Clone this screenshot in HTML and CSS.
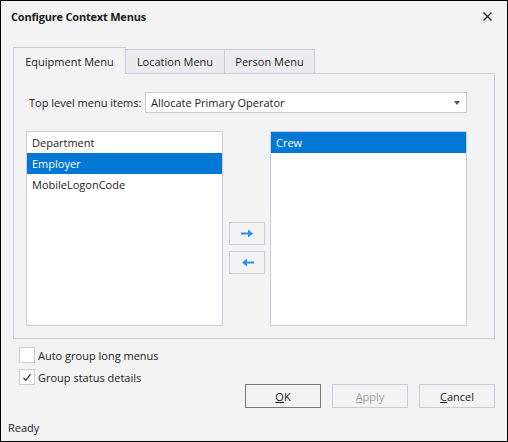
FILE: index.html
```html
<!DOCTYPE html>
<html>
<head>
<meta charset="utf-8">
<link rel="stylesheet" href="styles.css">
</head>
<body>
<div class="window">
  <div class="titlebar">
    <span class="title">Configure Context Menus</span>
    <svg class="close" width="9" height="9" viewBox="0 0 9 9"><path d="M0.5 0.5 L8.5 8.5 M8.5 0.5 L0.5 8.5" stroke="#2b2b2b" stroke-width="1.3" fill="none"/></svg>
  </div>
  <div class="content">
    <div class="tabs">
      <div class="tab active">Equipment Menu</div>
      <div class="tab t-loc">Location Menu</div>
      <div class="tab t-per">Person Menu</div>
    </div>
    <div class="panel">
      <div class="toprow">
        <span class="label">Top level menu items:</span>
        <div class="combo">
          <span>Allocate Primary Operator</span>
          <span class="caret"></span>
        </div>
      </div>
      <div class="lists">
        <div class="list">
          <div class="item">Department</div>
          <div class="item sel">Employer</div>
          <div class="item">MobileLogonCode</div>
        </div>
        <div class="arrows">
          <div class="abtn"><svg width="13" height="9" viewBox="0 0 13 9"><path d="M0 3.5 H7 V0.5 L12 4.5 L7 8.5 V5.5 H0 Z" fill="#2a8ff0"/></svg></div>
          <div class="abtn"><svg width="13" height="9" viewBox="0 0 13 9"><path d="M13 3.5 H6 V0.5 L1 4.5 L6 8.5 V5.5 H13 Z" fill="#2a8ff0"/></svg></div>
        </div>
        <div class="list">
          <div class="item sel">Crew</div>
        </div>
      </div>
    </div>
    <div class="bottom">
      <div class="checks">
        <label class="check"><span class="box"></span>Auto group long menus</label>
        <label class="check"><span class="box"><svg width="10" height="9" viewBox="0 0 10 9"><path d="M1.5 4.8 L3.8 7.3 L8.5 1.2" stroke="#222" stroke-width="1.1" fill="none"/></svg></span>Group status details</label>
      </div>
      <div class="buttons">
        <div class="btn default"><u>O</u>K</div>
        <div class="btn disabled"><u>A</u>pply</div>
        <div class="btn"><u>C</u>ancel</div>
      </div>
    </div>
  </div>
  <div class="status">Ready</div>
</div>
</body>
</html>
```
FILE: styles.css
```css
* { box-sizing: border-box; }
html, body { margin: 0; padding: 0; }
body {
  font-family: "Open Sans", "Noto Sans", sans-serif;
  font-size: 11px;
  color: #1b1b1b;
  background: #f3f3f3;
}
.window {
  width: 508px;
  height: 442px;
  border: 1px solid #000;
  background: #f3f3f3;
  display: flex;
  flex-direction: column;
}
.titlebar {
  height: 30px;
  display: flex;
  align-items: center;
  justify-content: space-between;
  padding: 0 15px 0 10px;
}
.title { font-weight: 700; letter-spacing: -0.2px; }
.close { display: block; margin-top: 1px; }
.content { padding: 16px 12px 0 12px; }
.tabs {
  display: flex;
  align-items: flex-end;
  height: 26px;
}
.tab {
  height: 24px;
  border: 1px solid #cbcbdc;
  border-bottom: none;
  background: #ececf0;
  display: flex;
  align-items: center;
  justify-content: center;
  margin-left: -1px;
}
.tab.active {
  margin-left: 0;
  width: 113px;
  height: 27px;
  margin-bottom: -1px;
  background: #f3f3f3;
  padding-top: 1px;
  position: relative;
  z-index: 1;
}
.t-loc { width: 100px; }
.t-per { width: 91px; }
.panel {
  border: 1px solid #cbcbdc;
  height: 266px;
  padding: 18px 27px 12px 12px;
}
.toprow {
  display: flex;
  align-items: center;
  padding-left: 3px;
  gap: 7px;
}
.label { width: 109px; white-space: nowrap; }
.combo {
  flex: 1;
  height: 21px;
  background: #fff;
  border: 1px solid #cbcbdc;
  display: flex;
  align-items: center;
  justify-content: space-between;
  padding: 0 6px 0 5px;
}
.caret {
  width: 0; height: 0;
  border-left: 3.5px solid transparent;
  border-right: 3.5px solid transparent;
  border-top: 4px solid #555;
  margin-top: 1px;
}
.lists {
  display: flex;
  margin-top: 18px;
}
.list {
  width: 197px;
  height: 195px;
  background: #fff;
  border: 1px solid #cbcbdc;
}
.item {
  height: 21px;
  line-height: 21px;
  padding-left: 5px;
}
.item.sel { background: #0078d4; color: #fff; }
.arrows {
  width: 47px;
  padding: 91px 5px 0 6px;
  display: flex;
  flex-direction: column;
  gap: 6px;
}
.abtn {
  height: 23px;
  border: 1px solid #cbcbdc;
  background: #f3f3f3;
  display: flex;
  align-items: center;
  justify-content: center;
}
.abtn svg { display: block; }
.bottom {
  height: 76px;
  display: flex;
  justify-content: space-between;
  align-items: flex-end;
}
.checks {
  align-self: flex-start;
  padding: 8px 0 0 6px;
  display: flex;
  flex-direction: column;
  gap: 6px;
}
.check {
  display: flex;
  align-items: center;
  gap: 3px;
  height: 16px;
}
.box {
  width: 16px;
  height: 16px;
  background: #fff;
  border: 1px solid #cbcbdc;
  display: flex;
  align-items: center;
  justify-content: center;
}
.box svg { display: block; }
.buttons {
  display: flex;
  gap: 11px;
  margin-bottom: 7px;
}
.btn {
  width: 76px;
  height: 24px;
  border: 1px solid #cbcbdc;
  background: #f3f3f3;
  display: flex;
  align-items: center;
  justify-content: center;
}
.btn.default { border-color: #7a7a7a; }
.btn.disabled { color: #a0a0a0; }
.status {
  flex: 1;
  display: flex;
  align-items: center;
  padding-left: 7px;
  padding-bottom: 1px;
}
```
